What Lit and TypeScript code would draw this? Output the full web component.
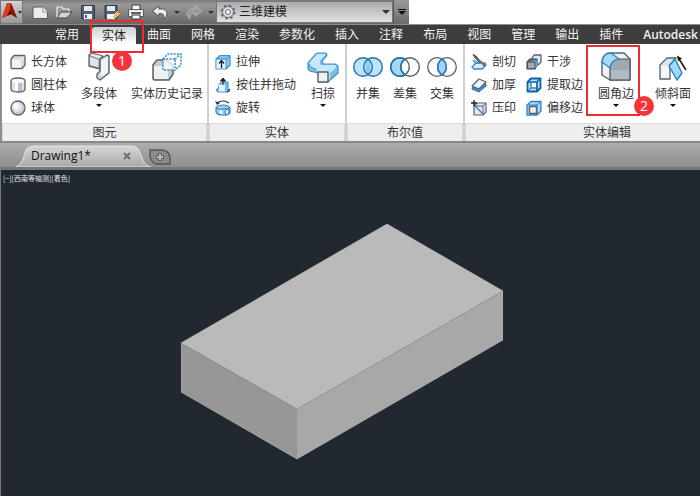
import { LitElement, html, svg, css, nothing, TemplateResult } from "lit";
import { customElement, property, state } from "lit/decorators.js";
import { classMap } from "lit/directives/class-map.js";

const solid = (body: TemplateResult, w = 16, h = 16) => html`
  <svg width=${w} height=${h} viewBox="0 0 ${w} ${h}" fill="none" stroke-linejoin="round" aria-hidden="true">${body}</svg>`;

const SLATE = "#59626c";
const BLUE = "#2272b4";
const ICE = "#bfe3f8";

const icons: Record<string, TemplateResult> = {
  box: solid(svg`<path d="M1 5.500Q1 5 1.500 4.500L4 1.500H14Q15 1.500 15 2.500V11L12 14.500H2Q1 14.500 1 13.500Z" fill="#d5dade" stroke=${SLATE} stroke-width="1.300"/><path d="M2 5.500H11V13.500H2Z" fill="#f1f3f5"/><path d="M11 5.500L14 2.500" stroke="#fff"/>`),
  cylinder: solid(svg`<path d="M1 4Q1 1 8 1T15 4V12Q15 15 8 15T1 12Z" fill="#dfe3e7" stroke=${SLATE} stroke-width="1.300"/><path d="M5 6H8V14H5Z" fill="#fff"/><path d="M8 6H12V14H8Z" fill="#b9c1c8"/><ellipse cx="8" cy="4" rx="6" ry="2" fill="#f8f9fa"/>`),
  sphere: solid(svg`<circle cx="8" cy="8" r="7" fill="#c3cad0" stroke=${SLATE} stroke-width="1.300"/><circle cx="7" cy="7" r="5" fill="#e4e8eb"/><circle cx="6" cy="6" r="2.500" fill="#fff"/>`),
  polysolid: solid(svg`<path d="M1 3L12 7V17L1 14Z" fill="#b0b9c0" stroke=${SLATE} stroke-width="1.300"/><path d="M1 3L4 1L15 4L12 7" fill="#e9edef" stroke=${SLATE} stroke-width="1.200"/><path d="M2 5L10 8V15L2 13Z" fill="#dfe4e7"/><path d="M12 7L19 3L21 4V21L12 28L9 26V22L12 19Z" fill="#cfd6db" stroke=${SLATE} stroke-width="1.400"/><path d="M13 9L20 5V20L13 25Z" fill="#f1f3f5"/>`, 22, 30),
  history: solid(svg`<path d="M1 13L5 8H14L21 13V22L17 28H3Q1 28 1 26Z" fill="#c6cdd3" stroke=${SLATE} stroke-width="1.500"/><path d="M2 14H16V27H2Z" fill="#eef0f2"/><path d="M11 7L16 2H29V13L23 18H11Z" fill="#fff" fill-opacity=".75"/><path d="M11 7H23V18H11ZM11 7L16 2H29V13L23 18M23 7L29 2" stroke="#2f8ad0" stroke-width="1.500" stroke-dasharray="2 1.200"/>`, 30, 30),
  extrude: solid(svg`<path d="M1 5L5 1.500H15V11L11 15H1Z" fill="#86c5ec" stroke="#3f93cb" stroke-width="1.200"/><path d="M1.500 5.500H11V14.500H1.500Z" fill="#e3f3fc"/><path d="M11 5L15 1.500M1 5H11V15" stroke="#3f93cb"/><path d="M6.500 14V7M4 9.500L6.500 6.500L9 9.500" stroke="#222" stroke-width="1.300"/>`),
  presspull: solid(svg`<path d="M3 15L1 13L4 10V7L7 5H13V12L15 14L13 15Z" fill="#79bce8" stroke="#3a8cc5"/><path d="M4 7.500H10V14.500H4Z" fill="#e3f3fc"/><path d="M8 8V2M5.500 4L8 1L10.500 4Z" stroke="#222" fill="#222"/><path d="M12 15L15 12" stroke="#222"/>`),
  revolve: solid(svg`<path d="M2 3Q8 -1 14 3" stroke="#333" stroke-width="1.200"/><path d="M0 1L2 5L5 3Z" fill="#333"/><path d="M1 7.500Q3 5 8 5T15 8V13Q13 15.500 9 15H7Q2 15 1 12Z" fill="#9fd2f2" stroke="#2f7db9" stroke-width="1.100"/><path d="M1 8Q4 10 8 9Q12 8 15 9" stroke="#2f7db9"/><path d="M6 10V14" stroke="#fff" stroke-width="2"/><ellipse cx="12" cy="12" rx="2" ry="2.500" fill="#e8f5fd" stroke="#2f7db9"/>`),
  sweep: solid(svg`<path d="M1 11L9 2Q10 1 12 1H19L20 3L15 9L16 12H28L31 14V21L23 28Q22 30 20 30H12L11 21L3 19Q1 18 1 16Z" fill="#7cc0e9" stroke="#3a8dc8" stroke-width="1.200"/><path d="M2 11L10 2H19L13 9V12Q14 14 17 13H29L21 21H11L9 17Q3 16 2 11Z" fill="#c7e8fa"/><path d="M29 14L22 21V28" stroke="#e3f4fd" stroke-width="1.200"/><path d="M2 12Q3 16 9 17" stroke="#3a8dc8"/><rect x="11" y="20" width="10" height="10" fill="#eef0f2" stroke=${SLATE} stroke-width="1.400"/>`, 32, 31),
  union: solid(svg`<circle cx="10" cy="11" r="9.300" fill=${ICE}/><circle cx="20" cy="11" r="9.300" fill=${ICE}/><path d="M15 3Q20 11 15 19Q10 11 15 3" fill="#8ecbee"/><circle cx="10" cy="11" r="9.300" stroke=${BLUE} stroke-width="1.400"/><circle cx="20" cy="11" r="9.300" stroke=${BLUE} stroke-width="1.400"/>`, 30, 22),
  subtract: solid(svg`<circle cx="10" cy="11" r="9.300" fill="#a5d8f5"/><circle cx="20" cy="11" r="9.300" fill="#fff" stroke=${SLATE} stroke-width="1.400"/><circle cx="10" cy="11" r="9.300" stroke=${SLATE} stroke-width="1.400"/><path d="M15 3.200A9.300 9.300 0 1 0 15 18.800A9.300 9.300 0 0 1 15 3.200Z" stroke=${BLUE} stroke-width="1.500"/>`, 30, 22),
  intersect: solid(svg`<circle cx="10" cy="11" r="9.300" stroke=${SLATE} stroke-width="1.300"/><circle cx="20" cy="11" r="9.300" stroke=${SLATE} stroke-width="1.300"/><path d="M15 3.200A9.300 9.300 0 0 1 15 18.800A9.300 9.300 0 0 1 15 3.200Z" fill="#9ed5f5" stroke=${BLUE} stroke-width="1.500"/>`, 30, 22),
  slice: solid(svg`<path d="M1 13L5 9H14L15 11L11 15H3Z" fill="#d5edfb" stroke="#2f86c6" stroke-width="1.300"/><path d="M2 6L8 9H4Z" fill="#d5edfb" stroke="#2f86c6"/><path d="M2 0.500L5 2L10 8L8 8L4 4Z" fill="#69727b" stroke="#4a5058"/><path d="M9 7L14 12" stroke="#9b5b48" stroke-width="2"/>`),
  thicken: solid(svg`<path d="M1 11L8 4L15 7V9L8 15L1 12Z" fill="#3d91cf" stroke="#2c6da3"/><path d="M1 9L8 2L15 5L8 12Z" fill="#eef1f3" stroke=${SLATE} stroke-width="1.200"/><path d="M5 9L9 5L11 6L8 9Z" fill="#fff"/>`),
  imprint: solid(svg`<path d="M3 6L6 3H15V12L12 15H3Z" fill="#e4e8eb" stroke=${SLATE} stroke-width="1.200"/><path d="M3 6H12V15M12 6L15 3" stroke=${SLATE}/><path d="M4 6L12 14" stroke="#2f8ad0" stroke-width="1.400"/><path d="M3 0V6M0 3H6" stroke="#222" stroke-width="1.400"/>`),
  interfere: solid(svg`<path d="M6 4L8 1H15V8L12 11H6Z" fill="#e3e7ea" stroke=${SLATE} stroke-width="1.300"/><path d="M1 8L4 5H11V11L9 15H1Z" fill="#68727c" stroke="#414951" stroke-width="1.200"/><path d="M2 9H8V14H2Z" fill="#a2abb3"/><path d="M8 7H11V11L9 13" stroke="#57aee4" stroke-width="1.500"/>`),
  extractEdges: solid(svg`<path d="M1.500 5L5 1.500H14.500V11L11 14.500H1.500Z" fill="#b8dff6" stroke="#0e63a8" stroke-width="1.800"/><path d="M1.500 5H11V14.500M11 5L14.500 1.500" stroke="#0e63a8" stroke-width="1.700"/><path d="M5 5V11H11M5 11L2 14" stroke="#0e63a8"/><path d="M6 6H10V10H6Z" fill="#fff"/>`),
  offsetEdges: solid(svg`<path d="M1 5L5 1.500H15V11L11 15H1Z" fill="#a9d8f4" stroke="#2a82c3" stroke-width="1.300"/><path d="M1 5H11V15M11 5L15 1.500" stroke="#2a82c3"/><rect x="3.500" y="6.500" width="7" height="7" fill="#f0f2f4" stroke=${SLATE} stroke-width="1.400"/>`),
  fillet: solid(svg`<path d="M1 10Q2 1 10 1H23L29 7V28H9L1 23Z" fill="#eef1f3" stroke=${SLATE} stroke-width="1.400"/><path d="M9 28V16Q10 7 18 7H29V28Z" fill="#9fa8b0" stroke="#4f5963" stroke-width="1.200"/><path d="M10 18H28V27H10Z" fill="#b2bac1"/><path d="M1 10Q2 1 10 1L18 7Q10 8 9 16Z" fill="#a9dbf8" stroke="#2f86c6" stroke-width="1.400"/>`, 30, 30),
  taper: solid(svg`<path d="M1 12L8 5H17L11 12V26H1Z" fill="#dfe4e8" stroke=${SLATE} stroke-width="1.300"/><path d="M2 13H10V25H2Z" fill="#f4f5f6"/><path d="M10 13L16 6L23 20L18 27Z" fill="#a3d7f6" stroke="#2c80c0" stroke-width="1.400"/><path d="M27 17L20 6" stroke="#111" stroke-width="1.500"/><path d="M18 2.500L23 5.500L19 8Z" fill="#111"/>`, 28, 29),
};

const quick: Record<string, TemplateResult> = {
  new: solid(svg`<path d="M1 3H11L15.500 8V14.500H1Z" fill="#e9ecef" stroke="#555b62"/><path d="M11 3V8H15.500" fill="#fff" stroke="#888"/>`),
  open: solid(svg`<path d="M1 14V3H6L7 5H13V8" fill="#8e979f" stroke="#eef1f4" stroke-width="1.200"/><path d="M1 14L5 8H16L11 14Z" fill="#cfd6dc" stroke="#3f464d"/>`),
  save: solid(svg`<path d="M1.500 1.500H14.500V14.500H1.500Z" fill="#50606f" stroke="#303841"/><path d="M4 2H12V7H4Z" fill="#e3e8ed"/><path d="M4 10H12V15H4Z" fill="#f4f6f8"/><path d="M6 11V14" stroke="#50606f" stroke-width="2"/>`),
  saveAs: solid(svg`<path d="M1 1.500H13V14.500H1Z" fill="#50606f" stroke="#303841"/><path d="M3 2H11V7H3Z" fill="#e3e8ed"/><path d="M3 10H11V15H3Z" fill="#f4f6f8"/><path d="M8 15L9 12L14 7L16 9L11 14Z" fill="#f2ad36" stroke="#fff" stroke-width=".8"/><path d="M14 7L16 9" stroke="#d9513c" stroke-width="1.500"/>`),
  print: solid(svg`<path d="M4 1H12V6H4Z" fill="#f7f8f9" stroke="#30363c"/><path d="M.5 5.500H15.500V12.500H.5Z" fill="#eef0f2" stroke="#555c63"/><path d="M3 9H13" stroke="#30363c" stroke-width="1.500"/><path d="M4 11H12V15H4Z" fill="#fff" stroke="#30363c"/>`),
  undo: solid(svg`<path d="M0.500 7L7 2V5Q15 4 15 10Q15 13 12 15Q13 9 7 9.500V12.500Z" fill="#e6eef5" stroke="#4a5661"/>`),
  redo: solid(svg`<path d="M15.500 7L9 2V5Q1 4 1 10Q1 13 4 15Q3 9 9 9.500V12.500Z" fill="#999" stroke="#b4b4b4"/>`),
};

/** A ribbon command, either a compact row or a tall button with its label below. */
@customElement("ribbon-command")
export class RibbonCommand extends LitElement {
  @property() icon = "";
  @property() label = "";
  @property({ type: Boolean }) large = false;
  @property({ type: Boolean }) menu = false;

  static styles = css`
    :host { display: block; flex: none; }
    button {
      display: flex; align-items: center; gap: 5px; height: 23px; padding: 0;
      border: 0; background: none; color: #333; font: inherit; line-height: 16px; white-space: nowrap;
    }
    svg { display: block; flex: none; }
    .large { flex-direction: column; gap: 0; height: 70px; }
    .picture { display: flex; align-items: center; height: 34px; }
    .compact .picture { height: 16px; }
    .caret { margin-top: 2px; border: 3px solid transparent; border-top-color: #111; border-bottom: 0; }
    .large .text { margin-top: 2px; }
  `;

  render() {
    return html`<button class=${classMap({ large: this.large, compact: !this.large })}>
      <span class="picture">${icons[this.icon]}</span>
      <span class="text">${this.label}</span>
      ${this.menu ? html`<span class="caret"></span>` : nothing}
    </button>`;
  }
}

@customElement("ribbon-panel")
export class RibbonPanel extends LitElement {
  @property() heading = "";

  static styles = css`
    :host { display: flex; flex-direction: column; flex: none; border-right: 2px solid #cfcfcf; background: #fff; }
    .commands { display: flex; flex: 1; padding: 6px 6px 3px; }
    .heading {
      margin: 0; border: 1px solid #dadada; border-bottom: 0; background: #eee; color: #333;
      font-size: 12px; font-weight: 400; line-height: 17px; text-align: center;
    }
  `;

  render() {
    return html`<div class="commands"><slot></slot></div><h2 class="heading">${this.heading}</h2>`;
  }
}

@customElement("app-root")
export class AppRoot extends LitElement {
  @state() private active = "实体";

  private tabs = ["常用", "实体", "曲面", "网格", "渲染", "参数化", "插入", "注释", "布局", "视图", "管理", "输出", "插件", "Autodesk"];

  static styles = css`
    :host {
      display: flex; flex-direction: column; min-height: 100vh; overflow: hidden; background: #fff;
      font: 12px/16px "Open Sans", "Noto Sans CJK SC", sans-serif;
    }
    button { padding: 0; border: 0; background: none; font: inherit; }
    svg { display: block; }

    .quick { display: flex; align-self: flex-start; height: 24px; background: linear-gradient(#7b7b7b, #999 20%, #676767); }
    .app { display: flex; align-items: center; width: 23px; margin-right: 5px; border: 1px solid #777; background: linear-gradient(#d2d2d2, #999); }
    .tool { display: grid; place-items: center; width: 24px; }
    .more { display: grid; place-items: center; width: 10px; }
    .down { border: 3px solid transparent; border-top-color: #333; border-bottom: 0; }
    .workspace {
      display: flex; align-items: center; gap: 3px; width: 177px; box-sizing: border-box; margin: 1px 0;
      padding-left: 3px; border: 1px solid #777; background: linear-gradient(#ababab, #e2e2e2 );
    }
    .workspace select { flex: 1; appearance: none; padding: 0; border: 0; background: none; color: #222; font: inherit; }
    .workspace .down { margin-right: 2px; border-width: 4px; border-bottom: 0; }
    .customize { display: flex; flex-direction: column; align-items: center; justify-content: center; gap: 1px; width: 16px; border-left: 1px solid #555; background: linear-gradient(#9a9a9a, #6a6a6a); }
    .customize .line { width: 8px; height: 1px; background: #111; }
    .customize .down { border-width: 4px; border-bottom: 0; border-top-color: #111; }

    .tabs { display: flex; align-items: flex-end; height: 20px; padding-left: 45px; border-top: 1px solid #8d8d8d; background: #3d3d3d; box-sizing: border-box; }
    .tab { position: relative; flex: none; height: 19px; padding: 0 10px; color: #f2f2f2; line-height: 20px; }
    .tab.active { height: 17px; margin: 0 1px 0 3px; border-radius: 3px 3px 0 0; background: linear-gradient(#cfcfcf, #fff); color: #222; line-height: 18px; }
    .latin { font-weight: 600; }

    .ribbon { display: flex; height: 97px; border-left: 2px solid #8f8f8f; background: #fff; overflow: hidden; box-sizing: border-box; }
    .column { display: flex; flex-direction: column; }
    .solids { display: flex; gap: 14px; margin-right: -2px; padding-left: 2px; }
    .forms { display: flex; gap: 11px; }
    .booleans { display: flex; gap: 7px; }
    .edit { display: flex; gap: 10px; padding-right: 52px; }
    .pair { display: flex; gap: 21px; padding-left: 5px; }
    .marked { position: relative; }

    .mark { position: absolute; border: 2px solid #ee2b2f; pointer-events: none; box-sizing: border-box; }
    .mark-tab { inset: -7px -8px -9px -2px; z-index: 1; }
    .mark-command { inset: -5px -6px 4px -12px; }
    .step {
      position: absolute; right: 10px; bottom: -20px; width: 20px; height: 20px; border-radius: 50%;
      background: #f5333a; color: #fff; font-size: 14px; line-height: 20px; text-align: center;
    }
    .mark-command .step { right: -16px; bottom: -2px; }

    .documents { display: flex; align-items: flex-end; height: 29px; padding-left: 16px; border-top: 2px solid #888; border-bottom: 3px solid #777; box-sizing: border-box; background: linear-gradient(#adadad, #8e8e8e); }
    .document { display: grid; width: 136px; height: 22px; }
    .document > * { grid-area: 1 / 1; }
    .document .row { display: flex; align-items: center; justify-content: space-between; padding: 0 20px 0 15px; }
    .name { color: #111; }
    .close { display: grid; place-items: center; width: 10px; height: 10px; }
    .add { height: 20px; margin-left: -3px; }

    .viewport { display: flex; flex: 1; flex-direction: column; border-left: 1px solid #777; background: #212830; color: #e8e8e8; }
    .view { margin: 4px 0 0 2px; font: 7px/8px "Noto Sans CJK SC", sans-serif; }
    .scene { display: flex; flex: 1; align-items: center; justify-content: center; padding: 6px 17px 0 0; }
  `;

  private tool(name: string, label: string) {
    return html`<button class="tool" aria-label=${label}>${quick[name]}</button>`;
  }

  private more(label: string) {
    return html`<button class="more" aria-label=${label}><span class="down"></span></button>`;
  }

  private row(icon: string, label: string) {
    return html`<ribbon-command icon=${icon} label=${label}></ribbon-command>`;
  }

  private big(icon: string, label: string, menu = false) {
    return html`<ribbon-command large icon=${icon} label=${label} ?menu=${menu}></ribbon-command>`;
  }

  render() {
    return html`
      <header class="quick">
        <button class="app" aria-label="应用程序菜单">
          <svg width="21" height="22" viewBox="0 0 21 22">
            <path d="M1 17L6 2H10L16 17L10 13L6 15Z" fill="#c5200f" />
            <path d="M6 2H10L9 8L6 15L1 17Z" fill="#dd3a25" />
            <path d="M10 2L16 17L11 14L9 8Z" fill="#8c1209" />
            <path d="M9 9L11 13L6 15Z" fill="#5f0d08" />
            <path d="M17 10H21L19 13Z" fill="#333" />
          </svg>
        </button>
        ${this.tool("new", "新建")}${this.tool("open", "打开")}${this.tool("save", "保存")}
        ${this.tool("saveAs", "另存为")}${this.tool("print", "打印")}${this.tool("undo", "放弃")}
        ${this.more("放弃列表")}${this.tool("redo", "重做")}${this.more("重做列表")}
        <label class="workspace">
          <svg width="16" height="16" viewBox="0 0 16 16" fill="none" stroke="#666c74">
            <circle cx="8" cy="8" r="6.500" stroke-width="2" stroke-dasharray="2.600 2.500" />
            <circle cx="8" cy="8" r="5.500" fill="#dde0e3" />
            <circle cx="8" cy="8" r="2.500" fill="#f5f5f5" />
          </svg>
          <select aria-label="工作空间"><option>三维建模</option></select>
          <span class="down"></span>
        </label>
        <button class="customize" aria-label="自定义快速访问工具栏"><span class="line"></span><span class="down"></span></button>
      </header>

      <nav class="tabs" role="tablist">
        ${this.tabs.map(
          (t) => html`<button
            role="tab"
            aria-selected=${t === this.active ? "true" : "false"}
            class=${classMap({ tab: true, active: t === this.active, latin: t === "Autodesk" })}
            @click=${() => (this.active = t)}
          >${t}${t === "实体" ? html`<span class="mark mark-tab"><span class="step">1</span></span>` : nothing}</button>`
        )}
      </nav>

      <section class="ribbon">
        <ribbon-panel heading="图元">
          <div class="solids">
            <div class="column">${this.row("box", "长方体")}${this.row("cylinder", "圆柱体")}${this.row("sphere", "球体")}</div>
            ${this.big("polysolid", "多段体", true)}${this.big("history", "实体历史记录")}
          </div>
        </ribbon-panel>
        <ribbon-panel heading="实体">
          <div class="forms">
            <div class="column">${this.row("extrude", "拉伸")}${this.row("presspull", "按住并拖动")}${this.row("revolve", "旋转")}</div>
            ${this.big("sweep", "扫掠", true)}
          </div>
        </ribbon-panel>
        <ribbon-panel heading="布尔值">
          <div class="booleans">${this.big("union", "并集")}${this.big("subtract", "差集")}${this.big("intersect", "交集")}</div>
        </ribbon-panel>
        <ribbon-panel heading="实体编辑">
          <div class="edit">
            <div class="column">${this.row("slice", "剖切")}${this.row("thicken", "加厚")}${this.row("imprint", "压印")}</div>
            <div class="column">${this.row("interfere", "干涉")}${this.row("extractEdges", "提取边")}${this.row("offsetEdges", "偏移边")}</div>
            <div class="pair">
              <div class="marked">
                ${this.big("fillet", "圆角边", true)}
                <span class="mark mark-command"><span class="step">2</span></span>
              </div>
              ${this.big("taper", "倾斜面", true)}
            </div>
          </div>
        </ribbon-panel>
      </section>

      <nav class="documents">
        <div class="document">
          <svg width="136" height="22" viewBox="0 0 136 22">
            <defs>
              <linearGradient id="tab" x2="0" y2="1"><stop stop-color="#d6d6d6" /><stop offset="1" stop-color="#a9a9a9" /></linearGradient>
            </defs>
            <path d="M0 22Q5 20 7 14L10 5Q12 1 17 1H115Q121 1 123 5L127 15Q129 21 135 22Z" fill="url(#tab)" stroke="#e4e4e4" />
          </svg>
          <div class="row">
            <button class="name">Drawing1*</button>
            <button class="close" aria-label="关闭">
              <svg width="8" height="8" viewBox="0 0 8 8" stroke="#707070" stroke-width="2"><path d="M1 1L7 7M7 1L1 7" /></svg>
            </button>
          </div>
        </div>
        <button class="add" aria-label="新图形">
          <svg width="22" height="16" viewBox="0 0 22 16">
            <path d="M1 1H14Q20 2 21 8V15H8Q2 14 1 7Z" fill="#8b8b8b" stroke="#555" stroke-width="1.400" />
            <path d="M11 4V12M7 8H15" stroke="#666" stroke-width="4" /><path d="M11 5V11M8 8H14" stroke="#bbb" stroke-width="2" />
          </svg>
        </button>
      </nav>

      <main class="viewport">
        <div class="view">[−][西南等轴测][着色]</div>
        <div class="scene">
          <svg width="322" height="236" viewBox="0 0 322 236" role="img" aria-label="长方体">
            <path d="M0 119L206 0L322 67L116 185Z" fill="#bababa" />
            <path d="M0 119L116 185V235L0 168Z" fill="#979797" />
            <path d="M116 185L322 67V116L116 235Z" fill="#a8a8a8" />
            <path d="M0 119L206 0L322 67V116L116 235L0 168Z" fill="none" stroke="#bdbdbd" stroke-width=".6" />
          </svg>
        </div>
      </main>
    `;
  }
}
